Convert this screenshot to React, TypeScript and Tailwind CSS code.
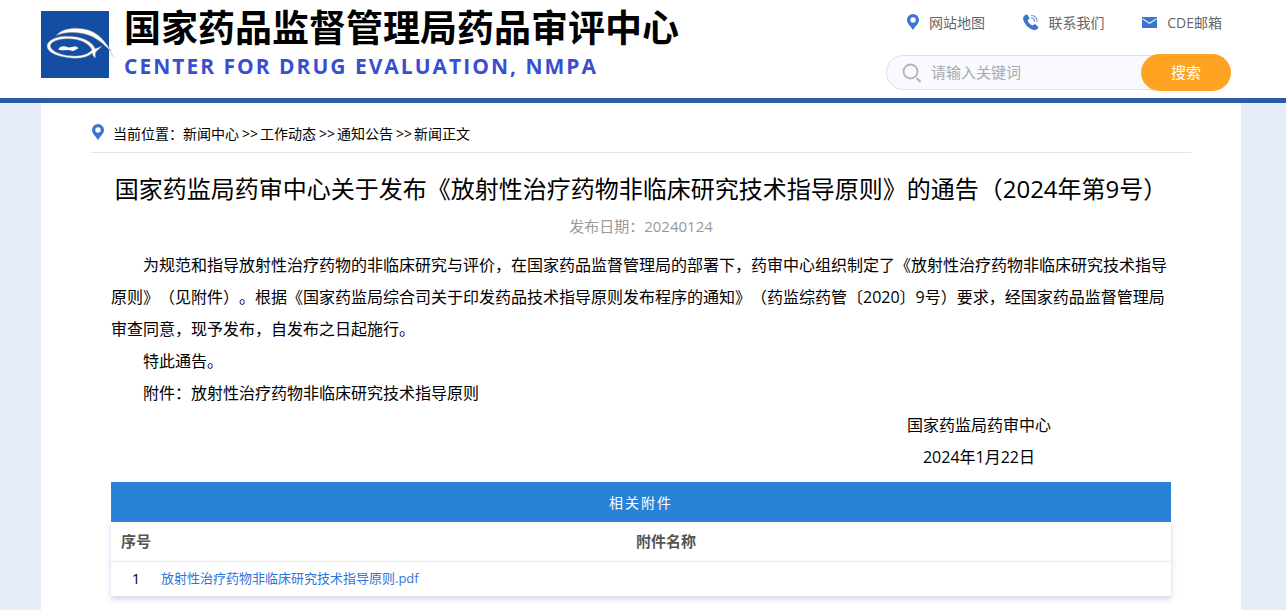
import { SVGProps } from "react";

const font =
  "font-['Open_Sans','Noto_Sans_CJK_SC',sans-serif] [text-spacing-trim:space-all]";

function PinIcon(props: SVGProps<SVGSVGElement>) {
  return (
    <svg viewBox="0 0 12 16" width="12" height="16" aria-hidden="true" {...props}>
      <path
        fill="#3a76cc"
        fillRule="evenodd"
        d="M6 0a6 6 0 0 0-6 6c0 3.6 3.6 6.2 6 10 2.400-3.800 6-6.400 6-10a6 6 0 0 0-6-6Zm0 3.300a2.700 2.700 0 1 1 0 5.400 2.700 2.700 0 0 1 0-5.400Z"
      />
    </svg>
  );
}

function PhoneIcon() {
  return (
    <svg viewBox="0 0 16 16" width="16" height="16" aria-hidden="true">
      <path
        fill="#3a76cc"
        d="M1.200 1.800 3 .6c.6-.4 1.300-.2 1.700.4l1.500 2.700c.3.600.2 1.200-.3 1.600l-1.300 1c.5 2.300 2.300 4.200 4.900 5.200l1.400-1c.5-.4 1.100-.3 1.600.1l2.300 2c.5.500.5 1.100.1 1.600-1.300 1.700-3 2.200-5 1.500C5.200 14.200 1.700 10.500.300 5.800-.100 4.200.1 2.700 1.200 1.800Z"
      />
      <path
        fill="none"
        stroke="#6d9add"
        strokeWidth="1.200"
        strokeLinecap="round"
        d="M8.600 1.500c3.200.2 5.400 2.500 5.500 5.700M8.300 3.900c2 .2 3.200 1.500 3.300 3.400"
      />
    </svg>
  );
}

function MailIcon() {
  return (
    <svg viewBox="0 0 15 11" width="15" height="11" aria-hidden="true">
      <path fill="#3a76cc" d="M0 0h15v11H0z" />
      <path fill="none" stroke="#dce8fa" strokeWidth="1.200" d="m.5 1.700 7 4.600 7-4.600" />
    </svg>
  );
}

function SearchIcon() {
  return (
    <svg viewBox="0 0 20 20" width="20" height="20" aria-hidden="true">
      <circle cx="8.500" cy="8.500" r="7" fill="none" stroke="#b4b4b4" strokeWidth="1.800" />
      <path stroke="#b4b4b4" strokeWidth="2" d="m14.500 15 4 4" />
    </svg>
  );
}

function Logo() {
  return (
    <svg viewBox="0 0 74 67" width="74" height="67" aria-hidden="true">
      <path fill="#134ea3" d="M0 0h68v67H0z" />
      <g fill="#fff" stroke="#8b8790" strokeWidth="0.500">
        <path d="M15.500 24.500C20 18 32 16 43 18c12 2 20 10 27 22-6-5-10-10-19-14.500C40 20.500 25 20 15.500 24.500Z" />
        <path
          fillRule="evenodd"
          d="M6 35c0-5 8-9.500 18-9.800 15-.4 27 4.300 30 12.300 2 0 4-1 6.500-2.500-1 3-5 4-6 7-.5 1.500 0 3 0 5-2-1.300-3.300-3-3.200-5.200C46 47.500 35 48 26 46.500 15 45 6 41 6 35Zm3.500-.5C9 38.500 16 43 26 44.500c9 1.300 20 .3 25-5.500-3-7-13-11.500-25-11.200-9 .2-16 3-16.500 6.700Z"
        />
        <path
          stroke="none"
          d="M17.500 38.500c0-2 3-3.500 6-3.300 2 .2 3 1.300 5 1.200 2-.2 3-1.400 6-.8 1.500.3 3 .9 2.500 1.800-.6.800-1.700.6-2.500 1.300-.8.500-1.500 1.300-3 1.200-1.600-.1-2-1-4-.9-3.500.1-6.500 1-10-.5Z"
        />
      </g>
      <path fill="none" stroke="#c5cfdf" d="m68.500 39 4 7" />
    </svg>
  );
}

const contacts = [
  { label: "网站地图", icon: <PinIcon /> },
  { label: "联系我们", icon: <PhoneIcon /> },
  { label: "CDE邮箱", icon: <MailIcon /> },
];

const crumbs = ["新闻中心", "工作动态", "通知公告", "新闻正文"];

export default function App() {
  return (
    <div className={`min-h-screen bg-[#e6edf8] text-black ${font}`}>
      <header className="border-b-[5px] border-[#2a5caa] bg-white pr-1">
        <div className="mx-auto flex h-[98px] max-w-[1200px] justify-between pr-[10px]">
          <a href="#" className="flex gap-[9px] pt-[11px]">
            <Logo />
            <div className="-mt-2">
              <p className="text-[37px] leading-[50px] font-bold">国家药品监督管理局药品审评中心</p>
              <p className="text-[21px] leading-[26px] font-bold tracking-[2px] text-[#3a4fd0]">
                CENTER FOR DRUG EVALUATION, NMPA
              </p>
            </div>
          </a>
          <div className="flex w-[345px] flex-col">
            <nav className="flex h-[54px] justify-between pt-3 pr-[9px] pl-[21px]">
              {contacts.map((c) => (
                <a
                  key={c.label}
                  href="#"
                  className="flex h-5 items-center gap-[10px] text-[14px] text-[#666]"
                >
                  {c.icon}
                  {c.label}
                </a>
              ))}
            </nav>
            <form className="flex h-[37px] items-center" onSubmit={(e) => e.preventDefault()}>
              <label className="-mr-5 flex h-[35px] min-w-0 flex-1 items-center gap-[9px] rounded-l-full border border-[#e0e0e4] bg-[#f9faff] pl-[15px]">
                <SearchIcon />
                <input
                  type="text"
                  aria-label="请输入关键词"
                  placeholder="请输入关键词"
                  className="min-w-0 flex-1 bg-transparent text-[15px] outline-none placeholder:text-[#aaa]"
                />
              </label>
              <button
                type="submit"
                className="z-10 h-[37px] w-[90px] rounded-full bg-[#ffa422] text-[15px] text-white"
              >
                搜索
              </button>
            </form>
          </div>
        </div>
      </header>

      <div className="pr-1">
        <main className="mx-auto min-h-[507px] max-w-[1200px] bg-white px-[50px] pb-3">
          <nav className="flex h-[50px] items-start gap-[9px] border-b border-[#e3e3e3] pt-5 pl-px text-[14px] leading-[22px]">
            <PinIcon className="mt-px" />
            <div>
              当前位置：
              {crumbs.map((c, i) => (
                <span key={c}>
                  {i > 0 && <span className="pr-[2px] pl-[3px]">&gt;&gt;</span>}
                  <a href="#">{c}</a>
                </span>
              ))}
            </div>
          </nav>

          <article className="px-5 pt-4">
            <h1 className="text-center text-[24px] leading-[40px]">
              国家药监局药审中心关于发布《放射性治疗药物非临床研究技术指导原则》的通告（2024年第9号）
            </h1>
            <p className="text-center text-[15px] leading-[34px] text-[#999]">发布日期：20240124</p>
            <div className="pt-[6px] text-[16px] leading-[32px]">
              <p className="indent-8">
                为规范和指导放射性治疗药物的非临床研究与评价，在国家药品监督管理局的部署下，药审中心组织制定了《放射性治疗药物非临床研究技术指导原则》（见附件）。根据《国家药监局综合司关于印发药品技术指导原则发布程序的通知》（药监综药管〔2020〕9号）要求，经国家药品监督管理局审查同意，现予发布，自发布之日起施行。
              </p>
              <p className="indent-8">特此通告。</p>
              <p className="indent-8">附件：放射性治疗药物非临床研究技术指导原则</p>
              <div className="flex justify-end pr-[120px] text-center">
                <div>
                  <p>国家药监局药审中心</p>
                  <p>2024年1月22日</p>
                </div>
              </div>
            </div>

            <table className="mt-[9px] w-full table-fixed border-collapse shadow-[0_2px_6px_#2a5caa40]">
              <caption className="h-10 bg-[#2a82d8] text-[14px] leading-[42px] tracking-[2px] text-white">
                相关附件
              </caption>
              <colgroup>
                <col className="w-[50px]" />
                <col />
              </colgroup>
              <thead>
                <tr className="h-[39px] border-b border-[#e8eaec] text-[15px] text-[#555]">
                  <th className="font-bold">序号</th>
                  <th className="font-bold">附件名称</th>
                </tr>
              </thead>
              <tbody>
                <tr className="h-[35px] border-b border-[#dcdfe3] text-[13px]">
                  <td className="text-center text-[14px]">1</td>
                  <td>
                    <a href="#" className="text-[#2e74da]">
                      放射性治疗药物非临床研究技术指导原则.pdf
                    </a>
                  </td>
                </tr>
              </tbody>
            </table>
          </article>
        </main>
      </div>
    </div>
  );
}
